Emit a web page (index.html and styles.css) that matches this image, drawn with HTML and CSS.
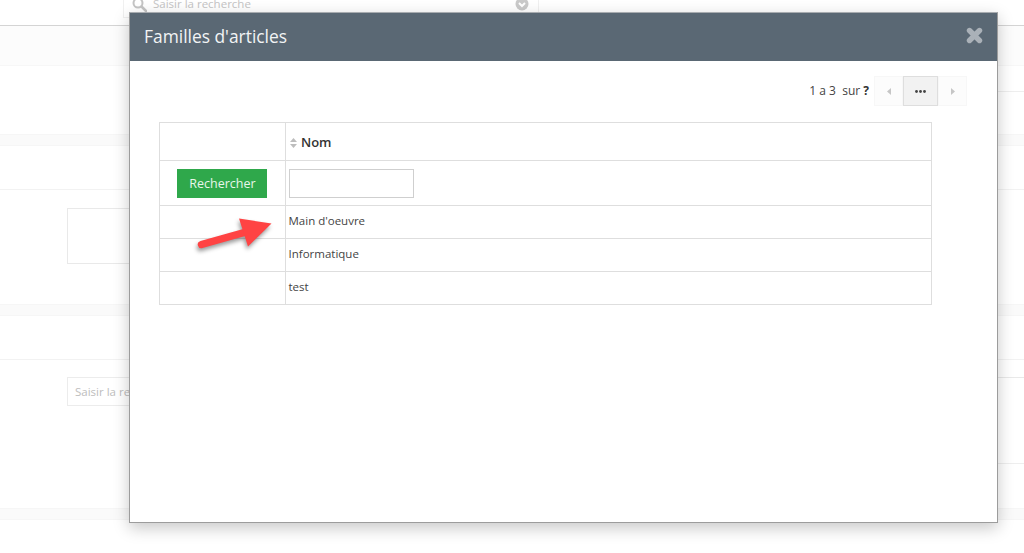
FILE: index.html
```html
<!DOCTYPE html>
<html lang="fr">
<head>
<meta charset="utf-8">
<title>Familles d'articles</title>
<link rel="stylesheet" href="styles.css">
</head>
<body>
<div class="page">
  <div class="topbar">
    <div class="searchbox">
      <svg class="search-icon" width="15" height="15" viewBox="0 0 15 15"><circle cx="6" cy="6" r="4.5" fill="none" stroke="#c4c4c4" stroke-width="2"/><path d="M9.5 9.5L14 14" stroke="#c4c4c4" stroke-width="2.5" stroke-linecap="round"/></svg>
      <span class="search-text">Saisir la recherche</span>
      <svg class="chev-icon" width="14" height="14" viewBox="0 0 14 14"><circle cx="7" cy="7" r="6.5" fill="#c9c9c9"/><path d="M4 6l3 3 3-3" fill="none" stroke="#fff" stroke-width="2"/></svg>
    </div>
  </div>
  <div class="tint"></div>
  <div class="rule-right gap-25"></div>
  <div class="spacer-42"></div>
  <div class="band"></div>
  <div class="section-a"></div>
  <div class="section-b"><div class="ghost-box"></div></div>
  <div class="band"></div>
  <div class="section-c"></div>
  <div class="section-d">
    <div class="ghost-input">Saisir la recherche</div>
    <div class="rule-right r-377"></div>
    <div class="rule-right r-463"></div>
  </div>
  <div class="band"></div>
</div>

<div class="modal">
  <div class="modal-head">
    <span class="modal-title">Familles d'articles</span>
    <svg class="close" width="17" height="17" viewBox="0 0 17 17"><path d="M3.5 3.5L13.5 13.5M13.5 3.5L3.5 13.5" stroke="#aab1b8" stroke-width="5.4" stroke-linecap="round"/></svg>
  </div>
  <div class="modal-body">
    <div class="pager-row">
      <span class="pager-info">1 a 3&nbsp; sur <b>?</b></span>
      <div class="pager">
        <span class="pg pg-side"><svg width="4" height="7" viewBox="0 0 4 7"><path d="M4 0v7L0 3.5z" fill="#c6c6c6"/></svg></span>
        <span class="pg pg-active"><svg width="11" height="3" viewBox="0 0 11 3"><circle cx="1.5" cy="1.5" r="1.4" fill="#444"/><circle cx="5.5" cy="1.5" r="1.4" fill="#444"/><circle cx="9.5" cy="1.5" r="1.4" fill="#444"/></svg></span>
        <span class="pg pg-side"><svg width="4" height="7" viewBox="0 0 4 7"><path d="M0 0v7l4-3.5z" fill="#c6c6c6"/></svg></span>
      </div>
    </div>
    <table class="grid">
      <colgroup><col class="col-a"><col></colgroup>
      <tr class="row-head">
        <td></td>
        <th><svg class="sort" width="7" height="10" viewBox="0 0 7 10"><path d="M3.5 0L7 4H0zM0 6h7L3.5 10z" fill="#bdbdbd"/></svg>Nom</th>
      </tr>
      <tr class="row-filter">
        <td class="center"><button class="btn" type="button">Rechercher</button></td>
        <td><input class="filter" type="text" aria-label="Nom"></td>
      </tr>
      <tr class="row-data"><td></td><td>Main d'oeuvre</td></tr>
      <tr class="row-data"><td></td><td>Informatique</td></tr>
      <tr class="row-data"><td></td><td>test</td></tr>
    </table>
  </div>
</div>

<svg class="arrow" width="90" height="50" viewBox="0 0 90 50"><path d="M11.5 34.5L56 22" stroke="#ff4343" stroke-width="7.5" stroke-linecap="round"/><path d="M49 8.5L81.5 13.5L58 36.5Z" fill="#ff4343"/></svg>
</body>
</html>
```

FILE: styles.css
```css
* { box-sizing: border-box; }
html, body { margin: 0; height: 100%; }
body {
  background: #fff;
  font-family: "Open Sans", "Liberation Sans", sans-serif;
  overflow: hidden;
  position: relative;
}
.page { display: flex; flex-direction: column; }

.topbar { height: 26px; border-bottom: 1px solid #d4d4d4; padding-left: 123px; }
.searchbox {
  width: 416px; height: 18px;
  border: 1px solid #f0f0f0; border-top: 0;
  display: flex; align-items: flex-end;
  padding: 0 9px 6px 8px;
  font-size: 11.5px; color: #c4c4c4;
  line-height: 14px;
}
.search-icon { flex: none; margin-bottom: -1px; margin-right: 6px; }
.search-text { flex: 1; }
.chev-icon { flex: none; }

.tint { height: 40px; background: #fcfcfc; border-bottom: 1px solid #f7f7f7; }
.gap-25 { margin-top: 25px; }
.rule-right { height: 1px; background: #eeeeee; margin-left: 540px; }
.spacer-42 { height: 42px; }
.band { height: 12px; background: #fafafa; border-top: 1px solid #f6f6f6; border-bottom: 1px solid #f6f6f6; }
.section-a { height: 44px; border-bottom: 1px solid #f2f2f2; }
.section-b { height: 114px; padding: 18px 0 0 67px; }
.ghost-box { width: 200px; height: 56px; border: 1px solid #e9e9e9; }
.section-c { height: 44px; border-bottom: 1px solid #f2f2f2; }
.section-d { height: 148px; padding-top: 17px; display: flex; flex-direction: column; }
.ghost-input {
  margin-left: 67px; width: 200px; height: 29px;
  border: 1px solid #ececec; padding-left: 7px;
  font-size: 11.5px; line-height: 27px; color: #bdbdbd;
}
.r-377 { margin-top: -29px; background: #e9e9e9; }
.r-463 { margin-top: 85px; background: #eeeeee; }

.modal {
  position: absolute; left: 129px; top: 12px;
  width: 869px; height: 511px;
  background: #fff;
  border: 1px solid #9c9c9c; border-top-color: #a8acb0;
  box-shadow: 0 5px 15px rgba(0,0,0,.22);
}
.modal-head {
  height: 48px; background: #5a6874;
  display: flex; align-items: center; justify-content: space-between;
  padding: 0 14px 3px 14px;
}
.modal-title { font-size: 17.4px; color: #f2f4f5; line-height: 24px; }
.close { flex: none; }
.modal-body { padding: 15px 30px 0 29px; }
.pager-row { display: flex; justify-content: flex-end; align-items: center; height: 30px; gap: 5px; margin-bottom: 16px; }
.pager-info { font-size: 12px; color: #444; margin-top: -2px; }
.pager-info b { color: #333; }
.pager { display: flex; height: 30px; }
.pg { display: flex; align-items: center; justify-content: center; border: 1px solid #f7f7f7; background: #fcfcfc; }
.pg-side { width: 29px; }
.pg-active { width: 35px; background: #f2f2f2; border-color: #dedede; }

.grid { width: 773px; margin-left: 0; border-collapse: collapse; table-layout: fixed; font-size: 11.5px; color: #444; }
.col-a { width: 126px; }
.grid td, .grid th { border: 1px solid #dedede; padding: 0 3px; text-align: left; }
.grid .row-data td { padding: 0 3px 4px 2.5px; }
.row-head { height: 38px; }
.row-head th { font-size: 13px; font-weight: 600; color: #333; padding-left: 4px; }
.sort { margin-right: 4px; vertical-align: -1px; }
.row-filter { height: 45px; }
.row-data { height: 33px; }
.grid td.center { text-align: center; padding-right: 5px; }
.btn {
  width: 90px; height: 29px;
  background: #2fa84b; border: 0;
  font: 12.5px "Open Sans", "Liberation Sans", sans-serif;
  color: #e8f6ea; padding: 0 0 0 2px;
  display: inline-block; vertical-align: middle;
}
.filter { display: block; width: 125px; height: 29px; border: 1px solid #cfcfcf; margin: 0; background: #fff; }

.arrow {
  position: absolute; left: 190px; top: 210px;
  filter: drop-shadow(-1px 3px 2px rgba(0,0,0,.4));
}
```
